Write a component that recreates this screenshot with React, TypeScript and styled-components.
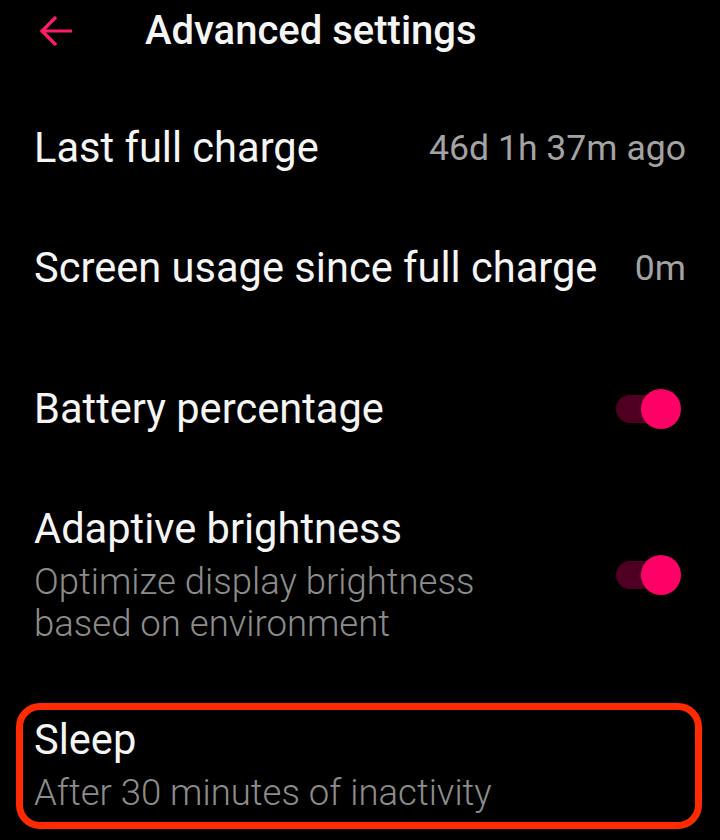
import React from "react";
import styled, { createGlobalStyle } from "styled-components";

const Global = createGlobalStyle`
  html, body { margin: 0; padding: 0; background: #000; }
  body { font-family: Roboto, "Noto Sans", sans-serif; color: #f5f5f5; -webkit-font-smoothing: antialiased; }
`;

const Screen = styled.div`
  width: 720px;
  height: 840px;
  background: #000;
  display: flex;
  flex-direction: column;
  overflow: hidden;
`;

const Header = styled.header`
  height: 62px;
  display: flex;
  align-items: center;
  padding-left: 38px;
`;

const BackButton = styled.button`
  width: 36px;
  height: 36px;
  border: 0;
  padding: 0;
  background: transparent;
  display: flex;
  align-items: center;
  justify-content: center;
  margin-right: 71px;
`;

const Title = styled.h1`
  margin: 0;
  font-size: 40px;
  font-weight: 500;
  line-height: 44px;
  color: #f5f5f5;
  white-space: nowrap;
`;

const List = styled.div`
  display: flex;
  flex-direction: column;
  padding-top: 26px;
`;

const Row = styled.div<{ $h?: number; $gapTop?: number }>`
  display: flex;
  align-items: center;
  justify-content: space-between;
  height: ${(p) => p.$h ?? 120}px;
  padding: 0 34px;
  margin-top: ${(p) => p.$gapTop ?? 0}px;
  box-sizing: border-box;
`;

const TallRow = styled.div`
  display: flex;
  align-items: center;
  justify-content: space-between;
  padding: 35px 34px 0 34px;
`;

const Highlight = styled.div`
  margin: 58px 18px 0 16px;
  border: 7px solid #ff2a00;
  border-radius: 24px;
  padding: 5px 16px 8px 11px;
`;

const TextCol = styled.div`
  display: flex;
  flex-direction: column;
`;

const ItemTitle = styled.div`
  font-size: 41.6px;
  line-height: 50px;
  font-weight: 400;
  color: #f5f5f5;
  white-space: nowrap;
`;

const ItemSub = styled.div`
  font-size: 36.5px;
  line-height: 42px;
  font-weight: 300;
  color: #8c8c8c;
  margin-top: 7px;
  white-space: nowrap;
`;

const Value = styled.div`
  font-size: 35.6px;
  font-weight: 400;
  color: #a3a3a3;
  white-space: nowrap;
`;

const Toggle = styled.div`
  position: relative;
  width: 65px;
  height: 40px;
  margin-right: 5px;
  flex-shrink: 0;
`;

const Track = styled.div`
  position: absolute;
  left: 0;
  top: 6px;
  width: 50px;
  height: 28px;
  border-radius: 14px;
  background: #4f0022;
`;

const Thumb = styled.div`
  position: absolute;
  right: 0;
  top: 0;
  width: 40px;
  height: 40px;
  border-radius: 50%;
  background: #ff0066;
`;

const Switch = () => (
  <Toggle>
    <Track />
    <Thumb />
  </Toggle>
);

export default function App() {
  return (
    <>
      <Global />
      <Screen>
        <Header>
          <BackButton aria-label="Back">
            <svg width="34" height="34" viewBox="0 0 34 34" fill="none">
              <path d="M33 17H4M17 3L3 17l14 14" stroke="#ff1a6e" strokeWidth="3.2" />
            </svg>
          </BackButton>
          <Title>Advanced settings</Title>
        </Header>
        <List>
          <Row>
            <ItemTitle>Last full charge</ItemTitle>
            <Value>46d 1h 37m ago</Value>
          </Row>
          <Row>
            <ItemTitle>Screen usage since full charge</ItemTitle>
            <Value>0m</Value>
          </Row>
          <Row $gapTop={21}>
            <ItemTitle>Battery percentage</ItemTitle>
            <Switch />
          </Row>
          <TallRow>
            <TextCol>
              <ItemTitle>Adaptive brightness</ItemTitle>
              <ItemSub>
                Optimize display brightness
                <br />
                based on environment
              </ItemSub>
            </TextCol>
            <Switch />
          </TallRow>
          <Highlight>
            <TextCol>
              <ItemTitle>Sleep</ItemTitle>
              <ItemSub>After 30 minutes of inactivity</ItemSub>
            </TextCol>
          </Highlight>
        </List>
      </Screen>
    </>
  );
}
